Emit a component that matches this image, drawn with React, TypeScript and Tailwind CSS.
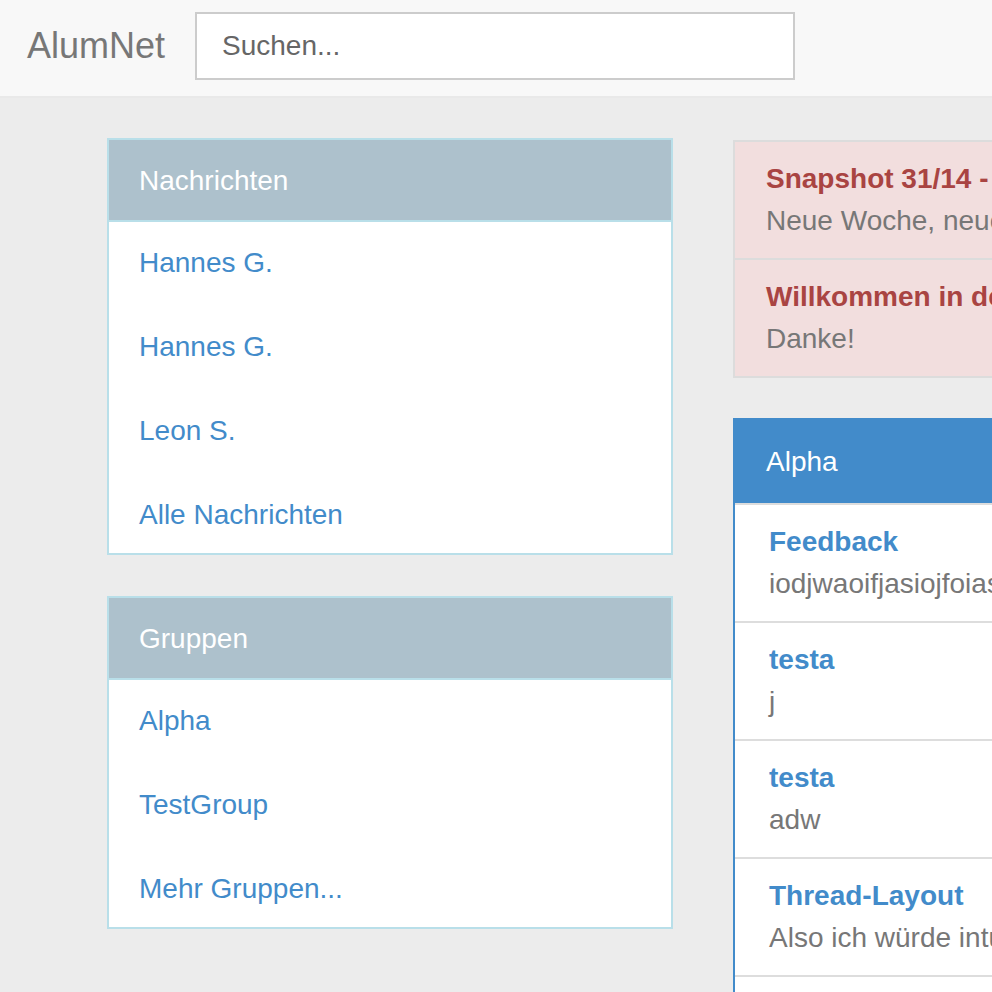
import React from 'react';

const messages = ['Hannes G.', 'Hannes G.', 'Leon S.', 'Alle Nachrichten'];
const groups = ['Alpha', 'TestGroup', 'Mehr Gruppen...'];

const news = [
  { title: 'Snapshot 31/14 - Neue Features und Bugfixes', text: 'Neue Woche, neue Features! Diese Woche haben wir einiges geschafft.' },
  { title: 'Willkommen in der AlumNet Beta!', text: 'Danke!' },
];

const threads = [
  { title: 'Feedback', text: 'iodjwaoifjasiojfoiasjfoiajsfoijasoifjaosijf' },
  { title: 'testa', text: 'j' },
  { title: 'testa', text: 'adw' },
  { title: 'Thread-Layout', text: 'Also ich würde intuitiv die Threads anders anordnen' },
  { title: 'Neuer Thread', text: 'Hallo zusammen' },
];

function SidePanel({ title, items }: { title: string; items: string[] }) {
  return (
    <div className="border-2 border-[#b9dfe9] bg-white mb-[41px]">
      <div className="h-[82px] flex items-center pt-[1px] px-[30px] bg-[#adc1cc] text-white text-[28px] border-b-2 border-[#b9dfe9]">
        {title}
      </div>
      {items.map((item, i) => (
        <div
          key={i}
          className={`${i === items.length - 1 ? 'h-[79px]' : 'h-[84px]'} pt-[21px] px-[30px] leading-[40px]`}
        >
          <a className="text-[#428bca] text-[28px]">{item}</a>
        </div>
      ))}
    </div>
  );
}

export default function App() {
  return (
    <div
      className="min-h-[992px] w-full overflow-hidden bg-[#ececec]"
      style={{ fontFamily: '"Liberation Sans", Arial, sans-serif' }}
    >
      <nav className="h-[98px] bg-[#f8f8f8] border-b-2 border-[#e9e9e9] flex items-start">
        <div className="pl-[27px] pr-[30px] h-[92px] flex items-center text-[36px] text-[#777]">
          AlumNet
        </div>
        <div className="mt-[12px] w-[600px] h-[68px] border-2 border-[#cccccc] bg-white flex items-center px-[25px] text-[28px] text-[#666]">
          Suchen...
        </div>
      </nav>

      <div className="flex items-start pt-[40px] pl-[107px] gap-[60px] w-[1500px]">
        <div className="w-[566px] shrink-0">
          <SidePanel title="Nachrichten" items={messages} />
          <SidePanel title="Gruppen" items={groups} />
        </div>

        <div className="w-[720px] shrink-0 pt-[2px]">
          <div className="border-2 border-[#dcdcdc] bg-[#f2dede] mb-[40px]">
            {news.map((n, i) => (
              <div
                key={i}
                className={`px-[31px] pt-[16px] pb-[16px] leading-[42px] text-[28px] whitespace-nowrap ${
                  i > 0 ? 'border-t-2 border-[#dcdcdc]' : ''
                }`}
              >
                <div className="font-bold text-[#a94442]">{n.title}</div>
                <div className="text-[#777]">{n.text}</div>
              </div>
            ))}
          </div>

          <div className="border-2 border-[#428bca] bg-white">
            <div className="h-[83px] flex items-center pt-[1px] px-[31px] bg-[#428bca] text-white text-[28px]">
              Alpha
            </div>
            {threads.map((t, i) => (
              <div
                key={i}
                className="border-t-2 border-[#dddddd] pl-[34px] pr-[31px] pt-[16px] pb-[16px] leading-[42px] text-[28px] whitespace-nowrap"
              >
                <div className="font-bold text-[#428bca]">{t.title}</div>
                <div className="text-[#777]">{t.text}</div>
              </div>
            ))}
          </div>
        </div>
      </div>
    </div>
  );
}
